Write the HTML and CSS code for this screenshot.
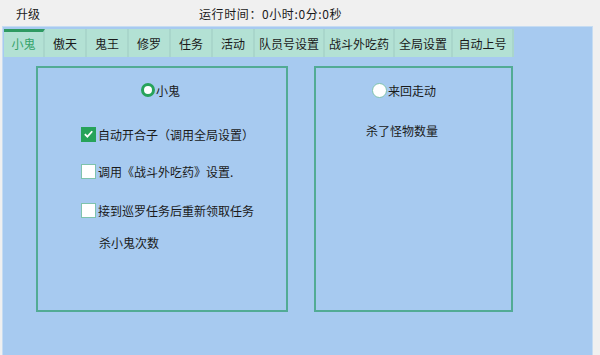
FILE: index.html
```html
<!DOCTYPE html>
<html>
<head>
<meta charset="utf-8">
<link rel="stylesheet" href="styles.css">
</head>
<body>
<div class="topbar">
  <span class="title">升级</span>
  <span class="runtime">运行时间：0小时:0分:0秒</span>
</div>
<div class="panel">
  <div class="tabs">
    <div class="tab active w2">小鬼</div>
    <div class="tab w2">傲天</div>
    <div class="tab w2">鬼王</div>
    <div class="tab w2">修罗</div>
    <div class="tab w2">任务</div>
    <div class="tab w2">活动</div>
    <div class="tab w5">队员号设置</div>
    <div class="tab w5">战斗外吃药</div>
    <div class="tab w4">全局设置</div>
    <div class="tab w4b">自动上号</div>
  </div>
  <div class="content">
    <div class="group g1">
      <div class="radio-row r1"><span class="radio on"></span><span>小鬼</span></div>
      <div class="check-row c1"><span class="check on"><svg viewBox="0 0 16 16" width="16" height="16"><path d="M3.5 8.2 L6.6 11.2 L12.6 4.6" fill="none" stroke="#fff" stroke-width="2.2"/></svg></span><span>自动开合子（调用全局设置）</span></div>
      <div class="check-row c2"><span class="check"></span><span>调用《战斗外吃药》设置.</span></div>
      <div class="check-row c3"><span class="check"></span><span>接到巡罗任务后重新领取任务</span></div>
      <div class="label l1">杀小鬼次数</div>
    </div>
    <div class="group g2">
      <div class="radio-row r2"><span class="radio"></span><span>来回走动</span></div>
      <div class="label l2">杀了怪物数量</div>
    </div>
  </div>
</div>
</body>
</html>
```
FILE: styles.css
```css
html, body {
  margin: 0;
  padding: 0;
  background: #f0f0f0;
  font-family: "Noto Sans CJK SC", "Microsoft YaHei", sans-serif;
  font-size: 12px;
  color: #1a1a1a;
  width: 600px;
  height: 355px;
  overflow: hidden;
}
.topbar {
  height: 26px;
  display: flex;
  align-items: center;
}
.title {
  margin-left: 16px;
  width: 183px;
}
.runtime {
  letter-spacing: 0.6px;
}
.panel {
  margin-left: 2px;
  width: 589px;
  height: 329px;
  background: #a7caf0;
  border-left: 1px solid #c6dcf2;
  border-right: 1px solid #c6dcf2;
  border-top: 1px solid #c6dcf2;
}
.tabs {
  display: flex;
  padding: 2px 0 0 1px;
  height: 28px;
}
.tab {
  background: #b3e1d4;
  border-right: 2px solid #a9d6cb;
  height: 28px;
  line-height: 29px;
  box-sizing: border-box;
  text-align: center;
}
.w2 { width: 42px; }
.w5 { width: 70px; }
.w4 { width: 58px; }
.w4b { width: 61px; }
.tab.active {
  width: 41px;
  color: #35a36a;
  border-top: 3px solid #2e9a62;
  line-height: 24px;
}
.content {
  display: flex;
  padding: 9px 0 0 33px;
  gap: 26px;
}
.group {
  border: 2px solid #52ab95;
  height: 242px;
  display: flex;
  flex-direction: column;
}
.g1 { width: 248px; }
.g2 { width: 195px; }
.radio-row, .check-row {
  display: flex;
  align-items: center;
  height: 16px;
}
.radio {
  width: 13px;
  height: 13px;
  border-radius: 50%;
  background: #fff;
  border: 1px solid #7fc3ad;
  margin-right: 1px;
}
.radio.on {
  border: 3px solid #27a35a;
  width: 8px;
  height: 8px;
}
.r1 { margin: 14px 0 0 103px; }
.r2 { margin: 14px 0 0 56px; }
.check {
  width: 13px;
  height: 13px;
  background: #fff;
  border: 1px solid #7fc3ad;
  margin-right: 2px;
  display: flex;
  align-items: center;
  justify-content: center;
}
.check.on {
  background: #27a35a;
  border-color: #27a35a;
}
.c1 { margin: 28px 0 0 43px; }
.c2 { margin: 21px 0 0 43px; }
.c3 { margin: 23px 0 0 43px; }
.label { height: 16px; line-height: 16px; }
.l1 { margin: 17px 0 0 61px; }
.l2 { margin: 25px 0 0 50px; }
```
